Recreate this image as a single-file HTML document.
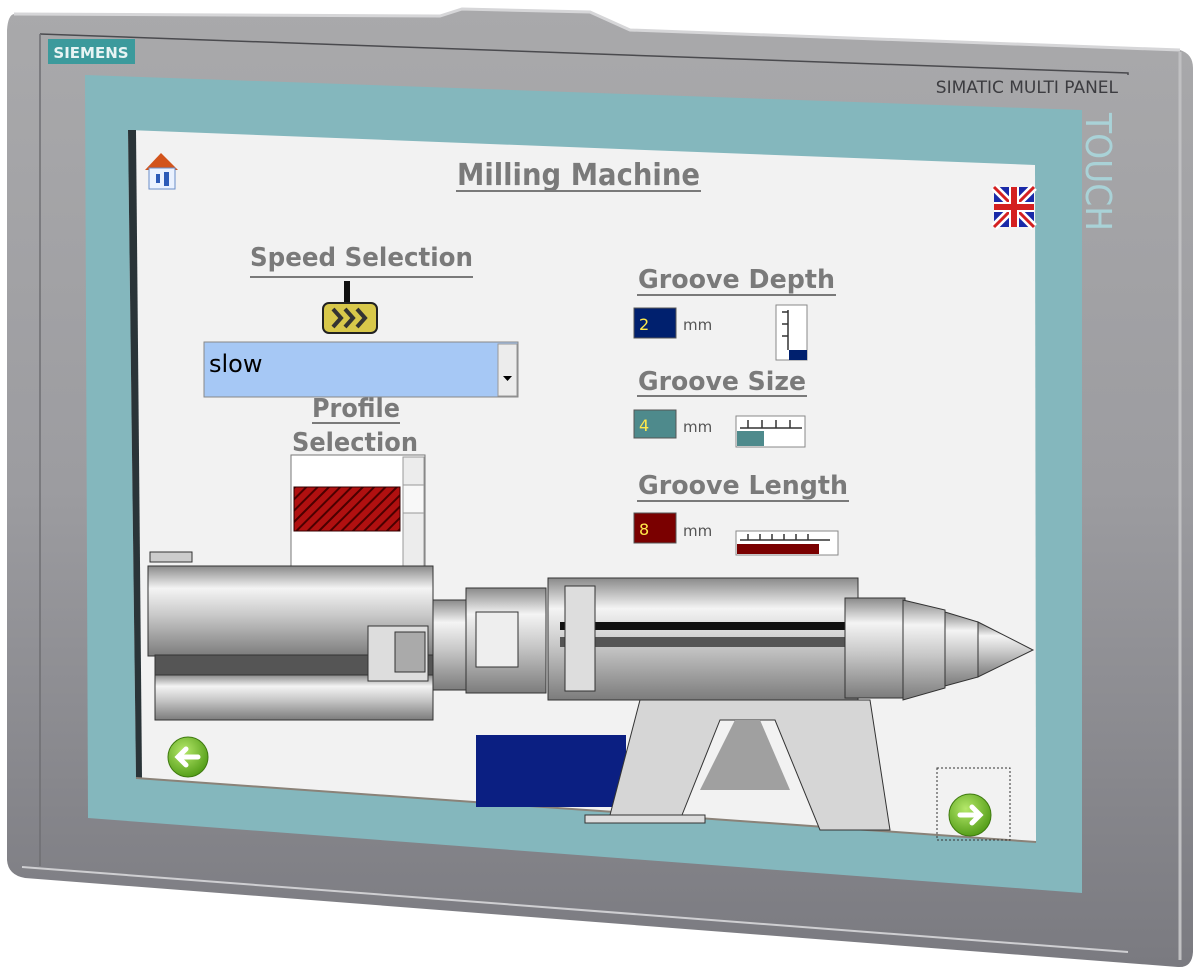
<!DOCTYPE html>
<html><head><meta charset="utf-8"><style>
html,body{margin:0;padding:0;background:#fff;width:1200px;height:975px;overflow:hidden}
svg{display:block}
text{font-family:"DejaVu Sans","Liberation Sans",sans-serif}
.h{font-weight:bold;fill:#7a7a7a}
</style></head><body>
<svg width="1200" height="975" viewBox="0 0 1200 975" xmlns="http://www.w3.org/2000/svg">
<defs>
<linearGradient id="bez" x1="0" y1="0" x2="0" y2="1">
<stop offset="0" stop-color="#a9a9ab"/><stop offset="0.5" stop-color="#9c9ca0"/><stop offset="1" stop-color="#7a7a80"/></linearGradient>
<linearGradient id="cyl" x1="0" y1="0" x2="0" y2="1">
<stop offset="0" stop-color="#8a8a8a"/><stop offset="0.25" stop-color="#f4f4f4"/><stop offset="0.55" stop-color="#c8c8c8"/><stop offset="1" stop-color="#7c7c7c"/></linearGradient>
<radialGradient id="grn" cx="0.4" cy="0.35" r="0.7"><stop offset="0" stop-color="#b5e86a"/><stop offset="1" stop-color="#4f9a14"/></radialGradient>
<pattern id="wood" width="8" height="8" patternUnits="userSpaceOnUse" patternTransform="rotate(45)"><rect width="8" height="8" fill="#b01010"/><rect width="2" height="8" fill="#4a0000"/></pattern>
</defs>
<path d="M14,14 L440,16 L462,9 L590,12 L630,30 L1180,50 Q1193,54 1193,68 L1193,952 Q1192,968 1178,967 L25,878 Q8,875 7,860 L7,30 Q8,15 14,14 Z" fill="url(#bez)"/>
<path d="M14,14 L440,16 L462,9 L590,12 L630,30 L1180,50" stroke="#d6d6d8" stroke-width="3" fill="none"/>
<path d="M1180,52 L1180,960" stroke="#c0c0c2" stroke-width="3"/>
<path d="M40,34 L1128,73 L1128,75" stroke="#4a4a4e" stroke-width="1.5" fill="none"/>
<path d="M40,34 L40,866" stroke="#6e6e72" stroke-width="1.5"/>
<path d="M22,867 L1128,952" stroke="#cfcfd2" stroke-width="2"/>
<rect x="48" y="39" width="87" height="25" fill="#3c9a9c"/>
<text x="91" y="58" font-size="15" font-weight="bold" fill="#e8f4f4" text-anchor="middle" font-family="Liberation Sans">SIEMENS</text>
<text x="1118" y="93" font-size="17" fill="#3c3c40" text-anchor="end" font-family="Liberation Sans">SIMATIC MULTI PANEL</text>
<path d="M85,75 L1082,110 L1082,893 L88,818 Z" fill="#84b7bd"/>
<text x="0" y="0" font-size="36" fill="#a9d2d7" font-family="Liberation Sans" textLength="118" lengthAdjust="spacingAndGlyphs" transform="translate(1086,113) rotate(90)">TOUCH</text>
<path d="M128,130 L1035,165 L1036,842 L136,778 Z" fill="#f2f2f2"/>
<path d="M128,130 L136,130 L142,778 L136,778 Z" fill="#2a3438"/>
<path d="M136,778 L1036,842" stroke="#8a8278" stroke-width="2"/>
<path d="M145,170 L161,153 L178,170 Z" fill="#d2541c"/>
<rect x="149" y="168" width="26" height="21" fill="#eaf2ff" stroke="#6a8fc8"/>
<rect x="156" y="174" width="4" height="9" fill="#2c5bb8"/><rect x="164" y="172" width="5" height="14" fill="#2c5bb8"/>
<text x="457" y="185" font-size="30" class="h" textLength="243" lengthAdjust="spacingAndGlyphs">Milling Machine</text>
<rect x="456" y="190" width="245" height="2" fill="#7a7a7a"/>
<rect x="994" y="187" width="40" height="40" fill="#1a2aa8"/>
<path d="M994,187 L1034,227 M1034,187 L994,227" stroke="#fff" stroke-width="8"/>
<path d="M994,187 L1034,227 M1034,187 L994,227" stroke="#d42020" stroke-width="3"/>
<path d="M1014,187 V227 M994,207 H1034" stroke="#fff" stroke-width="10"/>
<path d="M1014,187 V227 M994,207 H1034" stroke="#d42020" stroke-width="6"/>
<text x="250" y="266" font-size="26" class="h" textLength="223" lengthAdjust="spacingAndGlyphs">Speed Selection</text>
<rect x="250" y="276" width="223" height="2" fill="#7a7a7a"/>
<rect x="344" y="281" width="6" height="22" fill="#111"/>
<rect x="323" y="303" width="54" height="30" rx="6" fill="#d8c84a" stroke="#222" stroke-width="2"/>
<path d="M333,309 l8,9 l-8,9 M345,309 l8,9 l-8,9 M357,309 l8,9 l-8,9" stroke="#333" stroke-width="4" fill="none"/>
<rect x="204" y="342" width="314" height="55" fill="#a6c8f5" stroke="#888"/>
<text x="209" y="372" font-size="24" fill="#000" font-family="Liberation Sans">slow</text>
<rect x="498" y="344" width="19" height="52" fill="#ececec" stroke="#999"/>
<path d="M503,376 h9 l-4.5,5 z" fill="#000"/>
<text x="312" y="417" font-size="26" class="h" textLength="88" lengthAdjust="spacingAndGlyphs">Profile</text>
<rect x="312" y="422" width="88" height="2" fill="#7a7a7a"/>
<text x="292" y="451" font-size="26" class="h" textLength="126" lengthAdjust="spacingAndGlyphs">Selection</text>
<rect x="291" y="455" width="134" height="115" fill="#fff" stroke="#777"/>
<rect x="294" y="487" width="106" height="44" fill="url(#wood)" stroke="#300"/>
<rect x="403" y="457" width="21" height="112" fill="#ececec" stroke="#999"/>
<rect x="403" y="485" width="21" height="28" fill="#f8f8f8" stroke="#999"/>
<text x="638" y="288" font-size="26" class="h" textLength="197" lengthAdjust="spacingAndGlyphs">Groove Depth</text>
<rect x="637" y="294" width="199" height="2" fill="#7a7a7a"/>
<rect x="634" y="308" width="42" height="30" fill="#00206e" stroke="#555"/>
<text x="639" y="330" font-size="16" fill="#ffe94a">2</text>
<text x="683" y="330" font-size="15" fill="#555">mm</text>
<rect x="776" y="305" width="31" height="55" fill="#fff" stroke="#888"/>
<rect x="789" y="350" width="18" height="10" fill="#00206e"/>
<path d="M788,310 v40 M782,312 h6 M782,324 h6 M782,336 h6" stroke="#333" stroke-width="1.5"/>
<text x="638" y="390" font-size="26" class="h" textLength="168" lengthAdjust="spacingAndGlyphs">Groove Size</text>
<rect x="637" y="395" width="170" height="2" fill="#7a7a7a"/>
<rect x="634" y="410" width="42" height="28" fill="#4e8a8c" stroke="#555"/>
<text x="639" y="431" font-size="16" fill="#ffe94a">4</text>
<text x="683" y="432" font-size="15" fill="#555">mm</text>
<rect x="736" y="416" width="69" height="31" fill="#fff" stroke="#888"/>
<rect x="737" y="431" width="27" height="15" fill="#4e8a8c"/>
<path d="M740,428 h62 M748,420 v8 M762,420 v8 M776,420 v8 M790,420 v8" stroke="#333" stroke-width="1.5"/>
<text x="638" y="494" font-size="26" class="h" textLength="210" lengthAdjust="spacingAndGlyphs">Groove Length</text>
<rect x="637" y="500" width="212" height="2" fill="#7a7a7a"/>
<rect x="634" y="513" width="42" height="30" fill="#7a0000" stroke="#555"/>
<text x="639" y="535" font-size="16" fill="#ffe94a">8</text>
<text x="683" y="536" font-size="15" fill="#555">mm</text>
<rect x="736" y="531" width="102" height="24" fill="#fff" stroke="#888"/>
<rect x="737" y="544" width="82" height="10" fill="#7a0000"/>
<path d="M740,540 h90 M748,534 v6 M760,534 v6 M772,534 v6 M784,534 v6 M796,534 v6 M808,534 v6" stroke="#333" stroke-width="1.5"/>
<rect x="150" y="552" width="42" height="10" fill="#ccc" stroke="#333"/>
<rect x="380" y="572" width="42" height="14" fill="#ccc" stroke="#333"/>
<rect x="148" y="566" width="285" height="90" fill="url(#cyl)" stroke="#333"/>
<rect x="155" y="655" width="278" height="20" fill="#555" stroke="#333"/>
<rect x="155" y="675" width="278" height="45" fill="url(#cyl)" stroke="#333"/>
<rect x="368" y="626" width="60" height="55" fill="#ddd" stroke="#333"/>
<rect x="395" y="632" width="30" height="40" fill="#aaa" stroke="#333"/>
<rect x="433" y="600" width="35" height="90" fill="url(#cyl)" stroke="#333"/>
<rect x="466" y="588" width="80" height="105" fill="url(#cyl)" stroke="#333"/>
<rect x="476" y="612" width="42" height="55" fill="#eee" stroke="#333"/>
<rect x="548" y="578" width="310" height="122" fill="url(#cyl)" stroke="#333"/>
<rect x="560" y="622" width="340" height="8" fill="#111"/>
<rect x="560" y="637" width="340" height="10" fill="#555"/>
<rect x="565" y="586" width="30" height="105" fill="#ddd" stroke="#333"/>
<rect x="845" y="598" width="60" height="100" fill="url(#cyl)" stroke="#333"/>
<path d="M903,600 L945,610 L945,688 L903,700 Z" fill="url(#cyl)" stroke="#333"/>
<path d="M945,612 L978,622 L978,677 L945,686 Z" fill="url(#cyl)" stroke="#333"/>
<path d="M978,622 L1033,650 L978,677 Z" fill="url(#cyl)" stroke="#333"/>
<rect x="476" y="735" width="150" height="72" fill="#0b1f82"/>
<path d="M640,700 L870,700 L890,830 L820,830 L775,720 L720,720 L680,820 L610,815 Z" fill="#d6d6d6" stroke="#333"/>
<path d="M735,720 L760,720 L790,790 L700,790 Z" fill="#a0a0a0"/>
<rect x="585" y="815" width="120" height="8" fill="#ddd" stroke="#333"/>
<circle cx="188" cy="757" r="20" fill="url(#grn)" stroke="#3f7a10"/>
<path d="M198,757 H180 M186,749 L178,757 L186,765" stroke="#fff" stroke-width="5" fill="none" stroke-linecap="round"/>
<rect x="937" y="768" width="73" height="72" fill="none" stroke="#333" stroke-dasharray="2,2"/>
<circle cx="970" cy="815" r="21" fill="url(#grn)" stroke="#3f7a10"/>
<path d="M960,815 H978 M972,807 L980,815 L972,823" stroke="#fff" stroke-width="5" fill="none" stroke-linecap="round"/>
</svg>
</body></html>
